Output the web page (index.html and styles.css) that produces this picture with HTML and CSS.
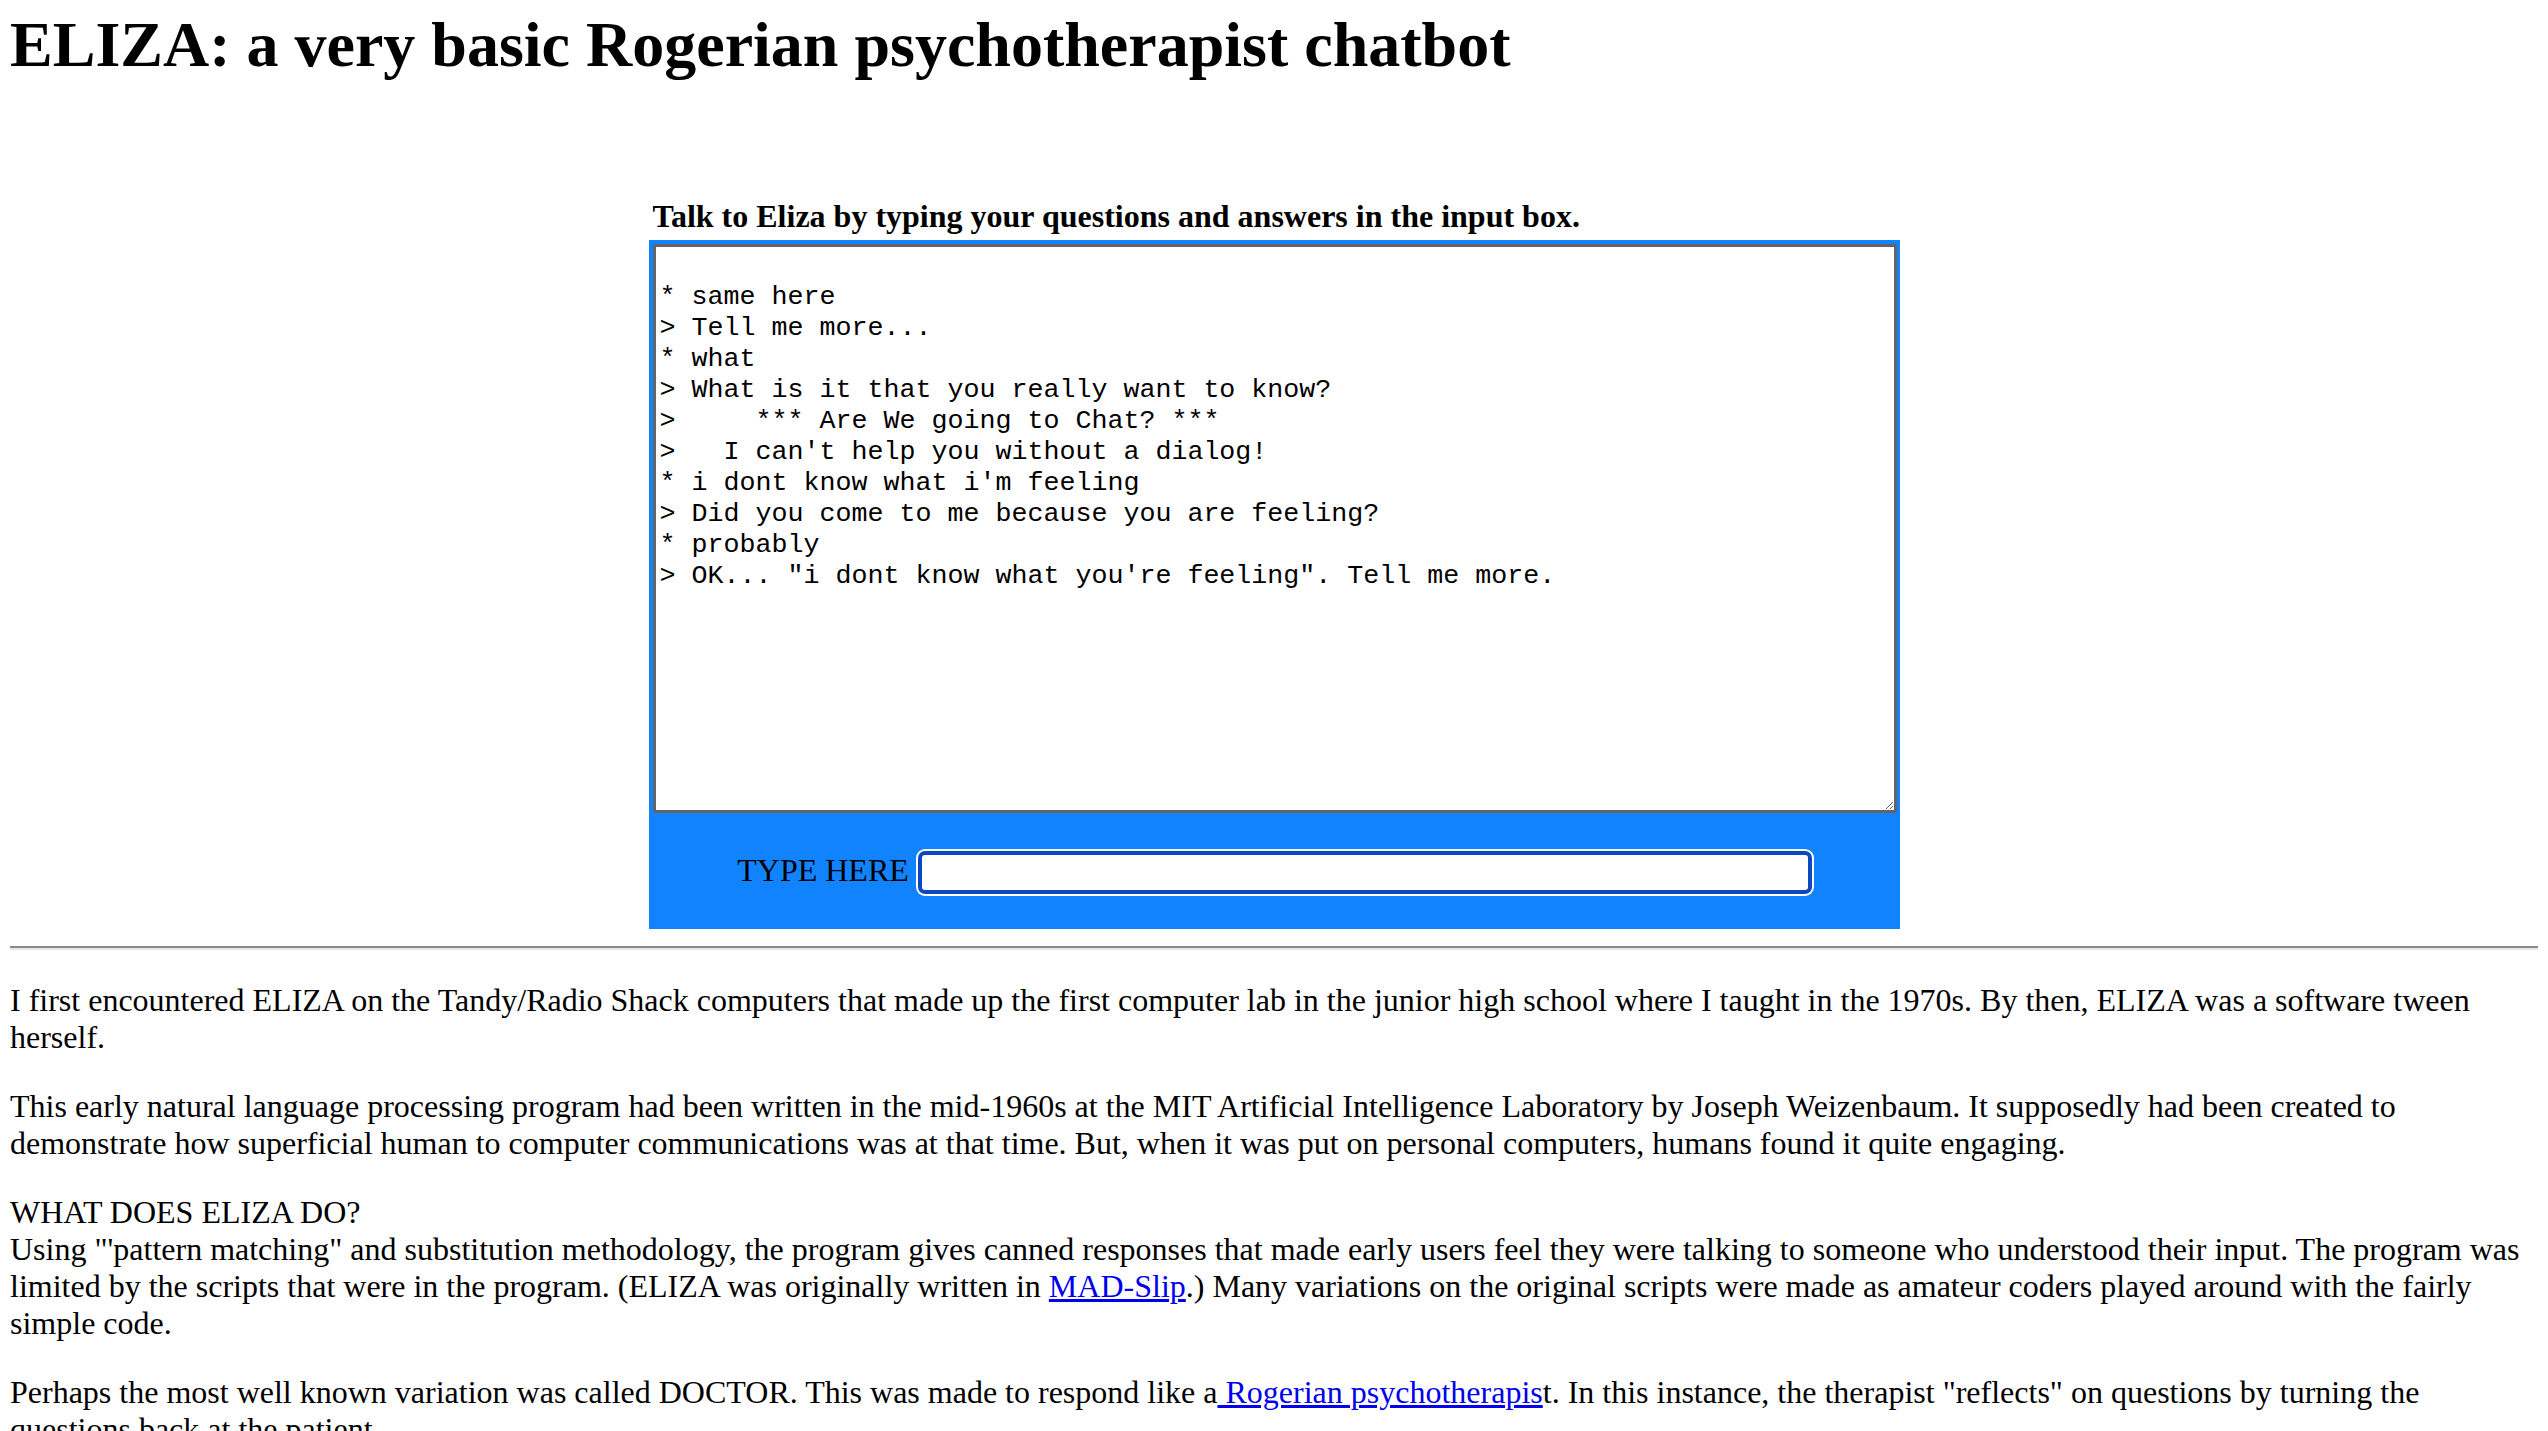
FILE: index.html
```html
<!DOCTYPE html>
<html lang="en">
<head>
<meta charset="utf-8">
<title>ELIZA: a very basic Rogerian psychotherapist chatbot</title>
<link rel="stylesheet" href="styles.css">
</head>
<body>
<div class="page">
  <h1 class="title">ELIZA: a very basic Rogerian psychotherapist chatbot</h1>

  <div class="chat">
    <div class="chat-title">Talk to Eliza by typing your questions and answers in the input box.</div>
    <div class="panel">
      <textarea class="log" spellcheck="false">

* same here
&gt; Tell me more...
* what
&gt; What is it that you really want to know?
&gt;     *** Are We going to Chat? ***
&gt;   I can't help you without a dialog!
* i dont know what i'm feeling
&gt; Did you come to me because you are feeling?
* probably
&gt; OK... "i dont know what you're feeling". Tell me more.</textarea>
      <div class="entry">
        <label class="entry-label" for="say">TYPE HERE</label>
        <input class="entry-input" id="say" type="text">
      </div>
    </div>
  </div>

  <hr class="rule">

  <p class="para">I first encountered ELIZA on the Tandy/Radio Shack computers that made up the first computer lab in the junior high school where I taught in the 1970s. By then, ELIZA was a software tween herself.</p>

  <p class="para">This early natural language processing program had been written in the mid-1960s at the MIT Artificial Intelligence Laboratory by Joseph Weizenbaum. It supposedly had been created to demonstrate how superficial human to computer communications was at that time. But, when it was put on personal computers, humans found it quite engaging.</p>

  <p class="para">WHAT DOES ELIZA DO?<br>Using "'pattern matching" and substitution methodology, the program gives canned responses that made early users feel they were talking to someone who understood their input. The program was limited by the scripts that were in the program. (ELIZA was originally written in <a class="link" href="#">MAD-Slip</a>.) Many variations on the original scripts were made as amateur coders played around with the fairly simple code.</p>

  <p class="para">Perhaps the most well known variation was called DOCTOR. This was made to respond like a<a class="link" href="#"> Rogerian psychotherapis</a>t. In this instance, the therapist "reflects" on questions by turning the questions back at the patient.</p>
</div>
</body>
</html>
```

FILE: styles.css
```css
html, body {
  margin: 0;
  padding: 0;
  background: #ffffff;
}

body {
  font-family: "Liberation Serif", "Times New Roman", serif;
  font-size: 32px;
  color: #000;
}

.page {
  padding: 8px 10px 0 10px;
}

.title {
  font-size: 64px;
  font-weight: bold;
  line-height: normal;
  margin: 0 0 116px 0;
}

.chat {
  width: 1251px;
  margin: 0 auto;
}

.chat-title {
  font-weight: bold;
  font-size: 32px;
  line-height: normal;
  padding-left: 4px;
  margin: 0 0 5px 0;
}

.panel {
  background: #1283ff;
  padding: 4px 3px 0 4px;
}

.log {
  display: block;
  box-sizing: border-box;
  width: 1244px;
  height: 569px;
  margin: 0;
  padding: 4px;
  border: 3px solid #646464;
  border-radius: 3px;
  background: #fff;
  font-family: "Liberation Mono", "Courier New", monospace;
  font-size: 26.67px;
  line-height: 31px;
  color: #000;
  white-space: pre;
  overflow: hidden;
  resize: both;
}

.entry {
  box-sizing: border-box;
  height: 116px;
  padding-top: 3px;
  display: flex;
  justify-content: center;
  align-items: center;
  gap: 9px;
}

.entry-label {
  font-size: 32px;
  line-height: normal;
  margin-bottom: 4px;
  color: #000;
}

.entry-input {
  box-sizing: border-box;
  width: 894px;
  height: 43px;
  margin: 0;
  padding: 0 6px;
  border: 4px solid #0b49c2;
  border-radius: 7px;
  box-shadow: 0 0 0 2px #ffffff;
  background: #fff;
  outline: none;
  font-size: 26px;
}

.rule {
  height: 0;
  border: none;
  border-top: 2px solid #8a8a8a;
  border-bottom: 2px solid #e6e6e6;
  margin: 17px 0 32px 0;
}

.para {
  margin: 32px 0;
  line-height: normal;
}

.link {
  color: #0000ee;
  text-decoration: underline;
}
```
